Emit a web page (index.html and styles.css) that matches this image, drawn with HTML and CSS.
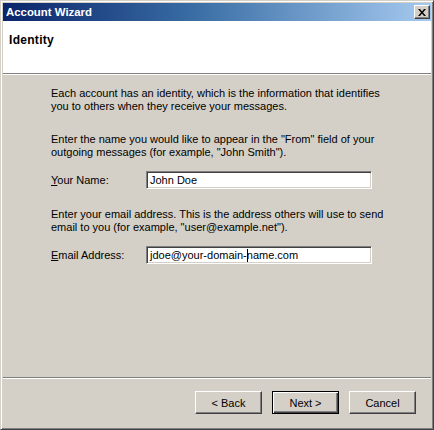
FILE: index.html
```html
<!DOCTYPE html>
<html>
<head>
<meta charset="utf-8">
<title>Account Wizard</title>
<link rel="stylesheet" href="styles.css">
</head>
<body>
<div class="window">
  <div class="titlebar">
    <span class="title">Account Wizard</span>
    <button class="close" aria-label="Close">
      <svg width="8" height="7" viewBox="0 0 8 7"><path d="M0 0h2l2 2.5L6 0h2L5 3.5 8 7H6L4 4.5 2 7H0l3-3.5z" fill="#000"/></svg>
    </button>
  </div>
  <div class="header">
    <div class="heading">Identity</div>
  </div>
  <div class="content">
    <p class="para first">Each account has an identity, which is the information that identifies<br>you to others when they receive your messages.</p>
    <p class="para">Enter the name you would like to appear in the "From" field of your<br>outgoing messages (for example, "John Smith").</p>
    <div class="row">
      <label class="label"><u>Y</u>our Name:</label>
      <div class="field">John Doe</div>
    </div>
    <p class="para third">Enter your email address. This is the address others will use to send<br>email to you (for example, "user@example.net").</p>
    <div class="row">
      <label class="label"><u>E</u>mail Address:</label>
      <div class="field">jdoe@your-domain-<span class="caret"></span>name.com</div>
    </div>
  </div>
  <div class="footer">
    <button class="btn">&lt; Back</button>
    <button class="btn default">Next &gt;</button>
    <button class="btn">Cancel</button>
  </div>
</div>
</body>
</html>
```

FILE: styles.css
```css
html, body {
  margin: 0;
  padding: 0;
  background: #d4d0c8;
}

body {
  font-family: "Liberation Sans", Arial, sans-serif;
  font-size: 11px;
  color: #000;
}

.window {
  width: 434px;
  height: 430px;
  box-sizing: border-box;
  border: 1px solid;
  border-color: #d4d0c8 #404040 #404040 #d4d0c8;
  box-shadow: inset 1px 1px #ffffff, inset -1px -1px #808080;
  padding: 2px;
  background: #d4d0c8;
  display: flex;
  flex-direction: column;
}

.titlebar {
  height: 18px;
  background: linear-gradient(to right, #0a246a 0%, #3a6ea5 45%, #a6caf0 100%);
  display: flex;
  align-items: center;
  justify-content: space-between;
  padding: 0 1px 0 3px;
}

.title {
  color: #fff;
  font-weight: bold;
  font-size: 11.4px;
  white-space: nowrap;
}

.close {
  width: 16px;
  height: 14px;
  padding: 0;
  margin: 0;
  background: #d4d0c8;
  border: 1px solid;
  border-color: #ffffff #404040 #404040 #ffffff;
  box-shadow: inset -1px -1px #808080;
  display: flex;
  align-items: center;
  justify-content: center;
}

.close svg {
  display: block;
  margin: 0 0 0 -1px;
}

.header {
  height: 53px;
  box-sizing: border-box;
  background: #fff;
  padding: 12px 0 0 6px;
  border-bottom: 1px solid #808080;
}

.heading {
  font-weight: bold;
  font-size: 12px;
  line-height: 15px;
  letter-spacing: 0.3px;
}

.content {
  flex: 1;
  border-top: 1px solid #fff;
  padding: 12px 0 0 48px;
}

.para {
  margin: 0;
  line-height: 13px;
  white-space: nowrap;
}

.para + .para {
  margin-top: 20px;
}

.para.third {
  margin-top: 19px;
}

.row {
  display: flex;
  align-items: center;
  margin-top: 12px;
}

.label {
  width: 95px;
  flex: none;
}

.field {
  width: 226px;
  height: 18px;
  box-sizing: border-box;
  background: #fff;
  border: 1px solid;
  border-color: #808080 #ffffff #ffffff #808080;
  box-shadow: inset 1px 1px #404040, inset -1px -1px #d4d0c8;
  padding: 0 0 0 3px;
  line-height: 16px;
  white-space: nowrap;
}

.caret {
  display: inline-block;
  width: 0;
  height: 13px;
  border-left: 1px solid #000;
  vertical-align: -3px;
  margin-right: -1px;
}

.footer {
  border-top: 1px solid #808080;
  box-shadow: inset 0 1px #ffffff;
  padding: 13px 15px 13px 0;
  display: flex;
  justify-content: flex-end;
  gap: 10px;
}

.btn {
  width: 67px;
  height: 23px;
  padding: 0;
  margin: 0;
  font-family: "Liberation Sans", Arial, sans-serif;
  font-size: 11px;
  color: #000;
  background: #d4d0c8;
  border: 1px solid;
  border-color: #ffffff #404040 #404040 #ffffff;
  box-shadow: inset -1px -1px #808080;
}

.btn.default {
  border-color: #000;
  box-shadow: inset 1px 1px #ffffff, inset -1px -1px #404040, inset -2px -2px #808080;
}
```
